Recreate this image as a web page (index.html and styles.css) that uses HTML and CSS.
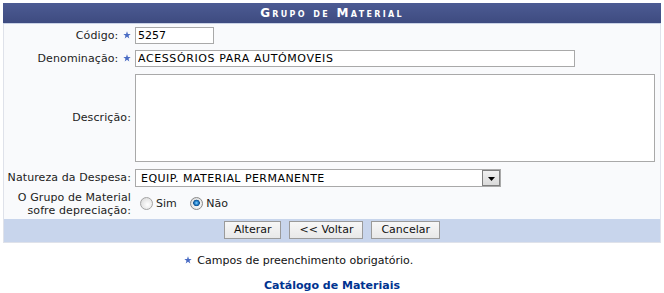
FILE: index.html
```html
<!DOCTYPE html>
<html lang="pt">
<head>
<meta charset="utf-8">
<title>Grupo de Material</title>
<link rel="stylesheet" href="styles.css">
</head>
<body>
<table class="form">
  <caption class="caption">Grupo de Material</caption>
  <tbody>
    <tr class="r-codigo">
      <th>Código: <svg class="star" viewBox="0 0 10 10"><path d="M5 0.4 L6.2 3.6 L9.6 3.7 L6.9 5.8 L7.9 9.3 L5 7.3 L2.1 9.3 L3.1 5.8 L0.4 3.7 L3.8 3.6 Z"/></svg></th>
      <td><input class="in-codigo" type="text" value="5257"></td>
    </tr>
    <tr class="r-denom">
      <th>Denominação: <svg class="star" viewBox="0 0 10 10"><path d="M5 0.4 L6.2 3.6 L9.6 3.7 L6.9 5.8 L7.9 9.3 L5 7.3 L2.1 9.3 L3.1 5.8 L0.4 3.7 L3.8 3.6 Z"/></svg></th>
      <td><input class="in-denom" type="text" value="ACESSÓRIOS PARA AUTÓMOVEIS"></td>
    </tr>
    <tr class="r-desc">
      <th>Descrição:</th>
      <td><textarea class="in-desc"></textarea></td>
    </tr>
    <tr class="r-nat">
      <th>Natureza da Despesa:</th>
      <td>
        <span class="sel-wrap">
          <select class="in-nat"><option>EQUIP. MATERIAL PERMANENTE</option></select>
          <span class="sel-arrow"><svg viewBox="0 0 7 4"><path d="M0 0 H7 L3.5 4 Z"/></svg></span>
        </span>
      </td>
    </tr>
    <tr class="r-dep">
      <th>O Grupo de Material<br>sofre depreciação:</th>
      <td>
        <label class="radio"><input type="radio" name="dep"> Sim</label>
        <label class="radio"><input type="radio" name="dep" checked> Não</label>
      </td>
    </tr>
  </tbody>
  <tfoot>
    <tr>
      <td colspan="2" class="buttons">
        <button type="button">Alterar</button>
        <button type="button">&lt;&lt; Voltar</button>
        <button type="button">Cancelar</button>
      </td>
    </tr>
  </tfoot>
</table>

<p class="obrig"><svg class="star" viewBox="0 0 10 10"><path d="M5 0.4 L6.2 3.6 L9.6 3.7 L6.9 5.8 L7.9 9.3 L5 7.3 L2.1 9.3 L3.1 5.8 L0.4 3.7 L3.8 3.6 Z"/></svg> Campos de preenchimento obrigatório.</p>
<p class="catalogo"><a href="#">Catálogo de Materiais</a></p>
</body>
</html>
```

FILE: styles.css
```css
html, body {
  background: #ffffff;
}
body {
  margin: 3px;
  font-family: "DejaVu Sans", Verdana, sans-serif;
  font-size: 11px;
  color: #222222;
}
.form {
  width: 658px;
  border-collapse: collapse;
  border-spacing: 0;
  background: #f9fafc;
  border: 1px solid #dfe2ea;
  border-top: none;
}
.caption {
  height: 20px;
  line-height: 20px;
  background: linear-gradient(#4c5b93, #3e4b80);
  color: #ffffff;
  font-weight: bold;
  font-variant: small-caps;
  font-size: 12px;
  letter-spacing: 2.3px;
  text-align: center;
  border-bottom: 1px solid #c9d2e6;
}
.form th {
  width: 125px;
  padding: 3px 2px 3px 2px;
  text-align: right;
  font-weight: normal;
  vertical-align: middle;
  white-space: nowrap;
  line-height: 13px;
  letter-spacing: 0.1px;
}
.form td {
  padding: 3px 2px 3px 2px;
  vertical-align: middle;
}
.star {
  width: 8px;
  height: 8px;
  fill: #4a6cc4;
  vertical-align: 0px;
  margin-left: 1px;
}
input[type=text], textarea, select {
  font-family: "DejaVu Sans", Verdana, sans-serif;
  font-size: 11px;
  color: #000000;
  border: 1px solid #a9a9a9;
  background: #ffffff;
  margin: 0;
  box-sizing: border-box;
  display: block;
}
input[type=text] {
  height: 17px;
  padding: 0 2px;
  letter-spacing: 0.6px;
}
.in-codigo { width: 79px; letter-spacing: 0 !important; }
.in-denom { width: 440px; }
.r-desc td { padding-top: 4px; }
.in-desc {
  width: 520px;
  height: 88px;
  resize: none;
}
.r-nat td { padding-top: 4px; }
.sel-wrap {
  position: relative;
  display: block;
  width: 366px;
}
.in-nat {
  -webkit-appearance: none;
  appearance: none;
  width: 366px;
  height: 18px;
  padding: 0 5px;
  border-radius: 0;
  letter-spacing: 0.45px;
}
.sel-arrow {
  position: absolute;
  right: 1px;
  top: 1px;
  width: 16px;
  height: 14px;
  border: 1px solid #7f7f7f;
  background: linear-gradient(#f0f0f0, #dadada);
  display: flex;
  align-items: center;
  justify-content: center;
}
.sel-arrow svg {
  width: 7px;
  height: 4px;
  fill: #000000;
  margin-top: 2px;
}
.r-dep th { padding-top: 1px; padding-bottom: 2px; }
.radio {
  display: inline-flex;
  align-items: center;
  margin-right: 5px;
  margin-left: 5px;
  color: #222222;
}
.radio input {
  -webkit-appearance: none;
  appearance: none;
  width: 13px;
  height: 13px;
  margin: 0 3px 0 0;
  border-radius: 50%;
  border: 1px solid #a4a4a4;
  background: radial-gradient(circle at 60% 60%, #ffffff 0, #e6e6e6 60%, #cfcfcf 100%);
  box-sizing: border-box;
}
.radio input:checked {
  border-color: #8a8a8a;
  background:
    radial-gradient(circle at 50% 45%, #8fd4ff 0, #2f8fd8 1.5px, #0c4f90 3px, transparent 3.6px),
    radial-gradient(circle at 60% 60%, #ffffff 0, #e6e6e6 60%, #cfcfcf 100%);
}
.buttons {
  background: #c8d5ec;
  text-align: center;
  padding: 2px 0 3px 0 !important;
  font-size: 0;
}
.buttons button {
  font-family: "DejaVu Sans", Verdana, sans-serif;
  font-size: 11px;
  color: #111111;
  height: 18px;
  padding: 0 9px;
  margin: 0 4px;
  border: 1px solid #9a9a9a;
  background: linear-gradient(#f7f7f7, #e8e8e8);
  border-radius: 0;
  line-height: 16px;
}
.obrig {
  margin: 11px 0 0 0;
  padding-right: 68px;
  text-align: center;
  line-height: 14px;
  color: #111111;
}
.obrig .star { margin-right: 2px; }
.catalogo {
  margin: 11px 0 0 0;
  text-align: center;
  line-height: 14px;
}
.catalogo a {
  color: #003390;
  font-weight: bold;
  text-decoration: none;
}
```
